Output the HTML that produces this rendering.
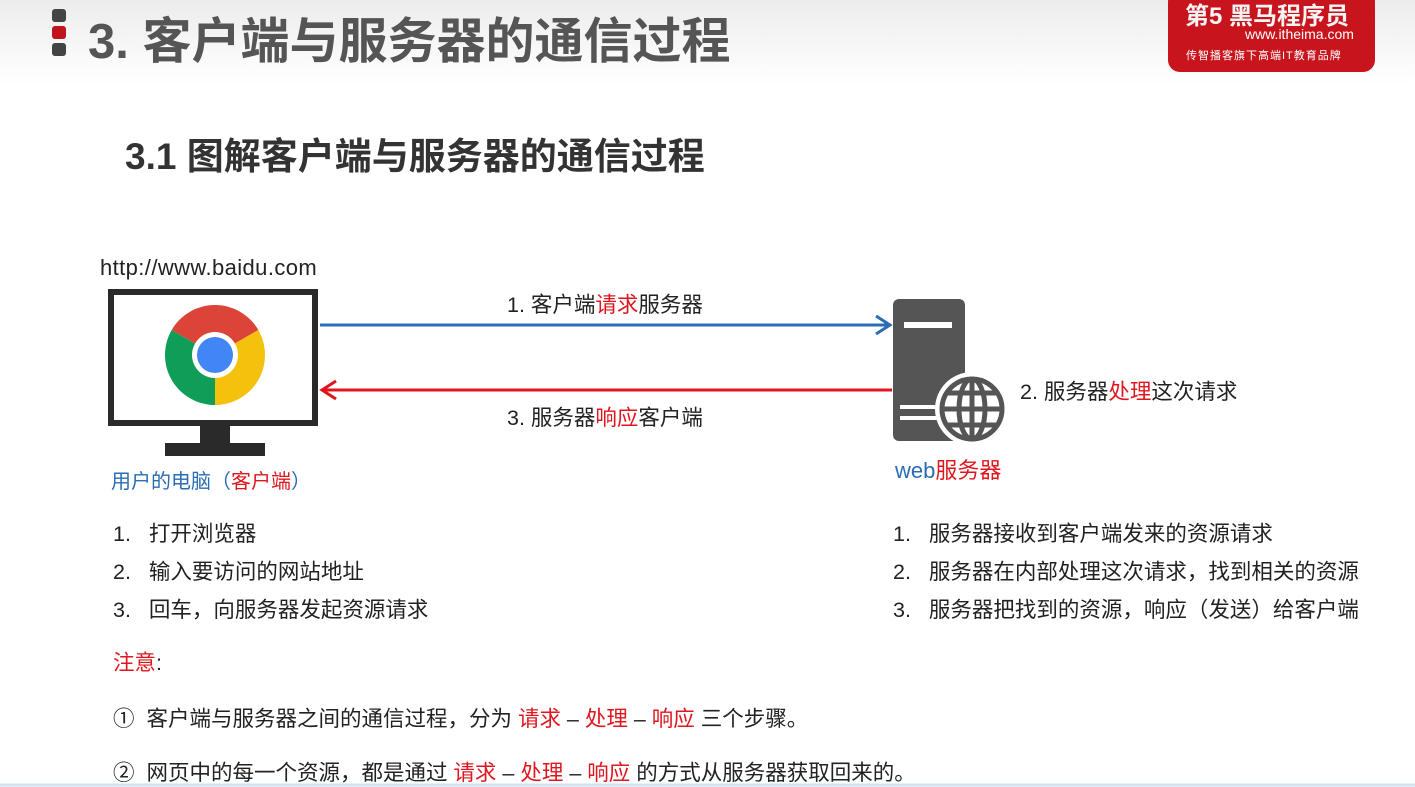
<!DOCTYPE html>
<html><head><meta charset="utf-8"><style>
body{margin:0;width:1415px;height:787px;overflow:hidden;background:#fff;font-family:"Liberation Sans","Noto Sans CJK SC",sans-serif;position:relative;color:#222}
.a{position:absolute;white-space:nowrap}
.r{color:#e0161e}
</style></head><body>
<div class="a" style="left:0;top:0;width:1415px;height:85px;background:linear-gradient(#ececec,#fafafa 70%,#fff)"></div>
<div class="a" style="left:52px;top:9px;width:14px;height:13px;background:#444;border-radius:3px"></div>
<div class="a" style="left:52px;top:26px;width:14px;height:13px;background:#c0141c;border-radius:3px"></div>
<div class="a" style="left:52px;top:43px;width:14px;height:13px;background:#444;border-radius:3px"></div>
<div class="a" style="left:88px;top:2px;font-size:49px;font-weight:bold;color:#555">3. 客户端与服务器的通信过程</div>
<div class="a" style="left:1168px;top:-10px;width:207px;height:82px;background:#c8141c;border-radius:12px"></div>
<div class="a" style="left:1185px;top:-4px;font-size:24px;font-weight:bold;color:#f4f4f4">第5 黑马程序员</div>
<div class="a" style="left:1245px;top:26px;font-size:14px;color:#fff">www.itheima.com</div>
<div class="a" style="left:1186px;top:47px;font-size:11px;color:#fff;letter-spacing:1px">传智播客旗下高端IT教育品牌</div>
<div class="a" style="left:125px;top:126px;font-size:37px;font-weight:bold;color:#333">3.1 图解客户端与服务器的通信过程</div>
<div class="a" style="left:100px;top:255px;font-size:22px;letter-spacing:0.4px">http://www.baidu.com</div>
<svg class="a" style="left:0;top:0" width="1415" height="787">
<rect x="111" y="292" width="204" height="131" fill="#fff" stroke="#2a2a2a" stroke-width="6"/>
<rect x="200" y="426" width="30" height="18" fill="#2a2a2a"/>
<rect x="165" y="443" width="100" height="13" fill="#2a2a2a"/>
<g transform="translate(215,355)">
<path d="M0,0 L-43.3,-25 A50,50 0 0 1 43.3,-25Z" fill="#db4437"/>
<path d="M0,0 L43.3,-25 A50,50 0 0 1 0,50Z" fill="#f4c20d"/>
<path d="M0,0 L0,50 A50,50 0 0 1 -43.3,-25Z" fill="#0f9d58"/>
<circle r="23" fill="#fff"/><circle r="18" fill="#4285f4"/>
</g>
<line x1="320" y1="325" x2="888" y2="325" stroke="#2a6db5" stroke-width="3"/>
<path d="M876,316 L890,325 L876,334" fill="none" stroke="#2a6db5" stroke-width="3"/>
<line x1="324" y1="390" x2="892" y2="390" stroke="#e0161e" stroke-width="3"/>
<path d="M336,381 L322,390 L336,399" fill="none" stroke="#e0161e" stroke-width="3"/>
<rect x="893" y="299" width="72" height="142" rx="6" fill="#555"/>
<rect x="904" y="322" width="48" height="6" fill="#fff"/>
<rect x="900" y="405" width="40" height="4" fill="#fff"/>
<rect x="900" y="416" width="40" height="4" fill="#fff"/>
<circle cx="972" cy="409" r="37" fill="#fff"/>
<g fill="none" stroke="#555" stroke-width="5">
<circle cx="972" cy="409" r="30"/>
<ellipse cx="972" cy="409" rx="13" ry="30"/>
<line x1="972" y1="379" x2="972" y2="439"/>
<line x1="942" y1="409" x2="1002" y2="409"/>
<line x1="947" y1="393" x2="997" y2="393"/>
<line x1="947" y1="425" x2="997" y2="425"/>
</g>
<line x1="0" y1="785" x2="1415" y2="785" stroke="#cfe3f2" stroke-width="3"/>
</svg>
<div class="a" style="left:507px;top:288px;font-size:21.5px">1. 客户端<span class="r">请求</span>服务器</div>
<div class="a" style="left:507px;top:401px;font-size:21.5px">3. 服务器<span class="r">响应</span>客户端</div>
<div class="a" style="left:1020px;top:375px;font-size:21.5px">2. 服务器<span class="r">处理</span>这次请求</div>
<div class="a" style="left:111px;top:465px;font-size:20px;color:#2a6db5">用户的电脑（<span class="r">客户端</span>）</div>
<div class="a" style="left:895px;top:453px;font-size:22px;color:#2a6db5">web<span class="r">服务器</span></div>
<div class="a" style="left:113px;top:515px;font-size:21.5px;line-height:38px">1.&nbsp;&nbsp;&nbsp;打开浏览器<br>2.&nbsp;&nbsp;&nbsp;输入要访问的网站地址<br>3.&nbsp;&nbsp;&nbsp;回车，向服务器发起资源请求</div>
<div class="a" style="left:893px;top:515px;font-size:21.5px;line-height:38px">1.&nbsp;&nbsp;&nbsp;服务器接收到客户端发来的资源请求<br>2.&nbsp;&nbsp;&nbsp;服务器在内部处理这次请求，找到相关的资源<br>3.&nbsp;&nbsp;&nbsp;服务器把找到的资源，响应（发送）给客户端</div>
<div class="a r" style="left:113px;top:646px;font-size:21.5px">注意<span style="color:#222">:</span></div>
<div class="a" style="left:113px;top:702px;font-size:21.5px">①&nbsp;&nbsp;客户端与服务器之间的通信过程，分为 <span class="r">请求</span> – <span class="r">处理</span> – <span class="r">响应</span> 三个步骤。</div>
<div class="a" style="left:113px;top:756px;font-size:21.5px">②&nbsp;&nbsp;网页中的每一个资源，都是通过 <span class="r">请求</span> – <span class="r">处理</span> – <span class="r">响应</span> 的方式从服务器获取回来的。</div>
</body></html>
